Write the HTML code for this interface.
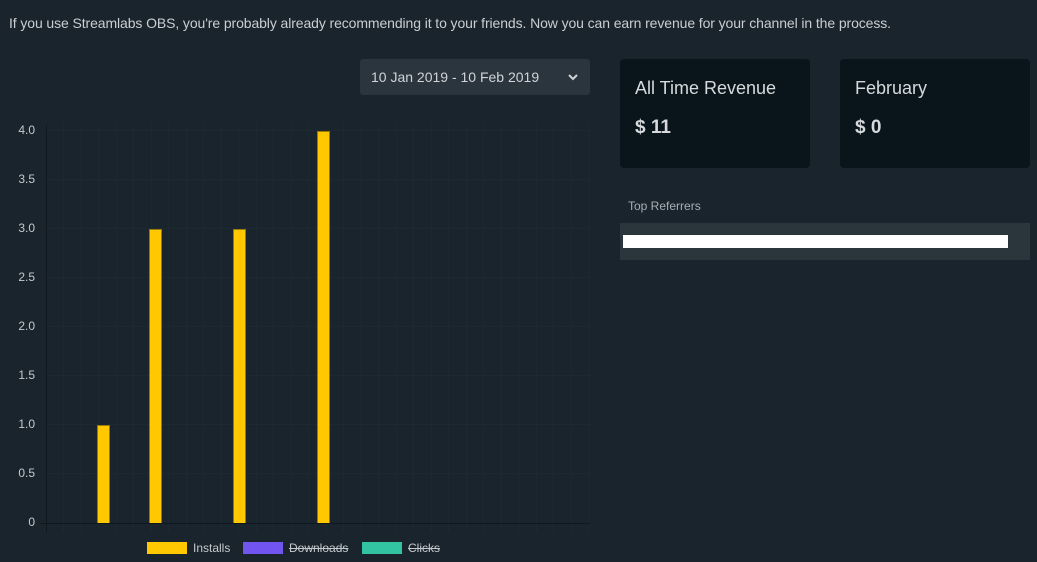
<!DOCTYPE html>
<html><head><style>
body{margin:0;width:1037px;height:562px;background:#1a242c;font-family:"Liberation Sans",sans-serif;position:relative;overflow:hidden;color:#c9ced2}
.a{position:absolute}
.card{position:absolute;top:59px;width:190px;height:109px;background:#09141b;border-radius:4px}
.card .t{position:absolute;left:15px;top:19px;font-size:18px;color:#d6dadd}
.card .v{position:absolute;left:15px;top:58px;font-size:19px;font-weight:bold;color:#d6dadd}
.yl{position:absolute;right:1002px;font-size:12px;color:#c4c9cd;text-align:right;width:40px}
.bar{position:absolute;background:#ffc800;width:13px;border:1px solid #9a7a00;border-bottom:none;box-sizing:border-box}
.leg{position:absolute;top:542px;width:40px;height:12px}
.lt{position:absolute;top:541px;font-size:12px;color:#c4c9cd}
</style></head><body>
<div class="a" style="left:9px;top:15px;font-size:14px;color:#c9ced2;letter-spacing:-0.1px">If you use Streamlabs OBS, you're probably already recommending it to your friends. Now you can earn revenue for your channel in the process.</div>
<div class="a" style="left:360px;top:59px;width:230px;height:36px;background:#2b353d;border-radius:3px">
<div class="a" style="left:11px;top:10px;font-size:14px;color:#d0d4d8">10 Jan 2019 - 10 Feb 2019</div>
<svg class="a" style="left:207px;top:13px" width="12" height="10" viewBox="0 0 12 10"><path d="M2 3l4 4 4-4" stroke="#d0d4d8" stroke-width="2" fill="none"/></svg>
</div>
<div class="card" style="left:620px"><div class="t">All Time Revenue</div><div class="v">$ 11</div></div>
<div class="card" style="left:840px"><div class="t">February</div><div class="v">$ 0</div></div>
<div class="a" style="left:628px;top:199px;font-size:12px;color:#a8b0b6">Top Referrers</div>
<div class="a" style="left:620px;top:223px;width:410px;height:37px;background:#2b353c"></div>
<div class="a" style="left:623px;top:235px;width:385px;height:13px;background:#fff"></div>
<svg class="a" style="left:0;top:0" width="600" height="540">
<g stroke="#1e2830">
<path d="M63.5 125V532M81.5 125V532M98.5 125V532M116.5 125V532M133.5 125V532M151.5 125V532M168.5 125V532M186.5 125V532M203.5 125V532M221.5 125V532M238.5 125V532M256.5 125V532M273.5 125V532M291.5 125V532M308.5 125V532M326.5 125V532M343.5 125V532M361.5 125V532M378.5 125V532M396.5 125V532M413.5 125V532M431.5 125V532M448.5 125V532M466.5 125V532M483.5 125V532M501.5 125V532M518.5 125V532M536.5 125V532M553.5 125V532M571.5 125V532M588.5 125V532"/>
</g>
<g stroke="#1e2830">
<path d="M46 130.5H590M46 179.5H590M46 228.5H590M46 277.5H590M46 326.5H590M46 375.5H590M46 424.5H590M46 473.5H590"/>
</g>
<path d="M40 523.5H590" stroke="#0f181e"/>
<path d="M46.5 125V532" stroke="#0f181e"/>
</svg>
<div class="yl" style="top:123px">4.0</div>
<div class="yl" style="top:172px">3.5</div>
<div class="yl" style="top:221px">3.0</div>
<div class="yl" style="top:270px">2.5</div>
<div class="yl" style="top:319px">2.0</div>
<div class="yl" style="top:368px">1.5</div>
<div class="yl" style="top:417px">1.0</div>
<div class="yl" style="top:466px">0.5</div>
<div class="yl" style="top:515px">0</div>
<div class="bar" style="left:97px;top:425px;height:98px"></div>
<div class="bar" style="left:149px;top:229px;height:294px"></div>
<div class="bar" style="left:233px;top:229px;height:294px"></div>
<div class="bar" style="left:317px;top:131px;height:392px"></div>
<div class="leg" style="left:147px;background:#ffc800"></div><div class="lt" style="left:193px">Installs</div>
<div class="leg" style="left:243px;background:#7254f0"></div><div class="lt" style="left:289px;text-decoration:line-through">Downloads</div>
<div class="leg" style="left:362px;background:#31c3a2"></div><div class="lt" style="left:408px;text-decoration:line-through">Clicks</div>
</body></html>
